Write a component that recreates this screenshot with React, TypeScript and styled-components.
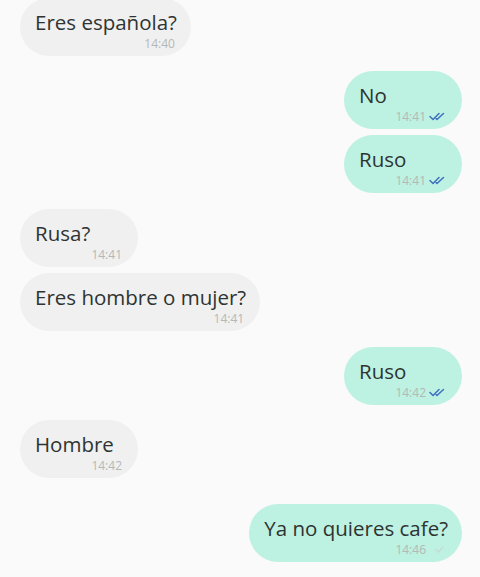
import React from 'react'
import styled, { createGlobalStyle } from 'styled-components'

const GlobalStyle = createGlobalStyle`
  html, body {
    margin: 0;
    padding: 0;
    background: #fafafa;
  }
  body {
    font-family: "Open Sans", Lato, sans-serif;
    overflow: hidden;
  }
`

type Msg = { text: string; time: string; out?: boolean; read?: boolean; gap: number }

const messages: Array<Msg> = [
  { text: 'Eres española?', time: '14:40', gap: 0 },
  { text: 'No', time: '14:41', out: true, read: true, gap: 15 },
  { text: 'Ruso', time: '14:41', out: true, read: true, gap: 6 },
  { text: 'Rusa?', time: '14:41', gap: 16 },
  { text: 'Eres hombre o mujer?', time: '14:41', gap: 6 },
  { text: 'Ruso', time: '14:42', out: true, read: true, gap: 16 },
  { text: 'Hombre', time: '14:42', gap: 15 },
  { text: 'Ya no quieres cafe?', time: '14:46', out: true, read: false, gap: 26 },
]

const Thread = styled.div`
  display: flex;
  flex-direction: column;
  padding: 0 18px 0 20px;
  margin-top: -2px;
  height: 579px;
  box-sizing: border-box;
  background: #fafafa;
`

const Row = styled.div<{ $out?: boolean; $gap: number }>`
  display: flex;
  justify-content: ${(p) => (p.$out ? 'flex-end' : 'flex-start')};
  margin-top: ${(p) => p.$gap}px;
`

const Bubble = styled.div<{ $out?: boolean }>`
  display: flex;
  flex-direction: column;
  min-width: 118px;
  box-sizing: border-box;
  height: 58px;
  padding: 10px 14px 5px 15px;
  border-radius: 29px;
  background: ${(p) => (p.$out ? '#bdf1e1' : '#f0f0f0')};
`

const Text = styled.div`
  font-size: 20.5px;
  line-height: 28px;
  color: #2e3432;
  white-space: nowrap;
`

const Meta = styled.div`
  display: flex;
  justify-content: flex-end;
  align-items: center;
  gap: 3px;
  height: 15px;
  padding-right: 2px;
`

const Time = styled.span`
  font-size: 12px;
  line-height: 15px;
  color: #b4b8b6;
`

const Ticks = ({ read }: { read?: boolean }) =>
  read ? (
    <svg width="17" height="9" viewBox="0 0 17 9" fill="none">
      <path d="M1 4.5 L4 7.5 L10 1.5" stroke="#3f70bf" strokeWidth="1.5" strokeLinecap="round" strokeLinejoin="round" />
      <path d="M7 6.5 L8 7.5 L14.5 1.5" stroke="#3f70bf" strokeWidth="1.5" strokeLinecap="round" strokeLinejoin="round" />
    </svg>
  ) : (
    <svg width="17" height="9" viewBox="0 0 17 9" fill="none">
      <path d="M7 4.5 L9.5 7 L14 2" stroke="#c9d8d3" strokeWidth="1.2" strokeLinecap="round" strokeLinejoin="round" />
    </svg>
  )

const App = () => {
  return (
    <>
      <GlobalStyle />
      <Thread>
        {messages.map((m, i) => (
          <Row key={i} $out={m.out} $gap={m.gap}>
            <Bubble $out={m.out}>
              <Text>{m.text}</Text>
              <Meta>
                <Time>{m.time}</Time>
                {m.out && <Ticks read={m.read} />}
              </Meta>
            </Bubble>
          </Row>
        ))}
      </Thread>
    </>
  )
}

export default App
